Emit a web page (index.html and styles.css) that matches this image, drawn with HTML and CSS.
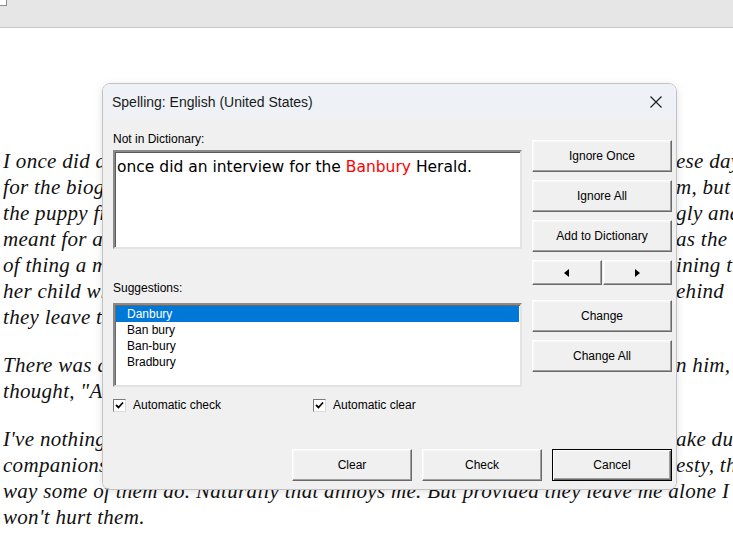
FILE: index.html
```html
<!DOCTYPE html>
<html>
<head>
<meta charset="utf-8">
<title>Spelling</title>
<link rel="stylesheet" href="styles.css">
</head>
<body>
<div class="toolbar"><span class="corner"></span></div>
<div class="doc">
  <div class="para">
    <div class="line"><span class="l">I once did an interview for the Banbury Herald. Th</span><span class="r">ese days</span></div>
    <div class="line"><span class="l">for the biography of a man who had known him, but</span><span class="r">m, but</span></div>
    <div class="line"><span class="l">the puppy from the old farm had grown up ugly and</span><span class="r">gly and</span></div>
    <div class="line"><span class="l">meant for a quiet life in the country, as it was the</span><span class="r">as the</span></div>
    <div class="line"><span class="l">of thing a mother says when she is explaining th</span><span class="r">ining th</span></div>
    <div class="line"><span class="l">her child why the dog must be left behind</span><span class="r">ehind</span></div>
    <div class="line"><span class="l">they leave them alone.</span><span class="r"></span></div>
  </div>
  <div class="para">
    <div class="line"><span class="l">There was a time when I had to go along with him, I</span><span class="r">n him, I</span></div>
    <div class="line"><span class="l">thought, "Ah well, that's the end of that."</span><span class="r"></span></div>
  </div>
  <div class="para">
    <div class="line"><span class="l">I've nothing against people who want to make du</span><span class="r">ake du</span></div>
    <div class="line"><span class="l">companions of us, as long as they do it with honesty, th</span><span class="r">esty, th</span></div>
    <div class="line full">way some of them do. Naturally that annoys me. But provided they leave me alone I</div>
    <div class="line full">won't hurt them.</div>
  </div>
</div>

<div class="dialog">
  <div class="titlebar">
    <span class="title">Spelling: English (United States)</span>
    <svg class="close" width="12" height="12" viewBox="0 0 12 12"><path d="M0.5 0.5 L11.5 11.5 M11.5 0.5 L0.5 11.5" stroke="#1f1f1f" stroke-width="1.2" fill="none"/></svg>
  </div>
  <div class="body">
    <div class="main">
      <div class="leftcol">
        <div class="label">Not in Dictionary:</div>
        <div class="textbox">once did an interview for the <span class="err">Banbury</span> Herald.</div>
        <div class="label sugg">Suggestions:</div>
        <div class="listbox">
          <div class="item sel">Danbury</div>
          <div class="item">Ban bury</div>
          <div class="item">Ban-bury</div>
          <div class="item">Bradbury</div>
        </div>
        <div class="checks">
          <label class="chk"><span class="box"><svg width="9" height="9" viewBox="0 0 9 9"><path d="M1 4 L3.5 6.5 L8 1.5" stroke="#000" stroke-width="1.8" fill="none"/></svg></span>Automatic check</label>
          <label class="chk"><span class="box"><svg width="9" height="9" viewBox="0 0 9 9"><path d="M1 4 L3.5 6.5 L8 1.5" stroke="#000" stroke-width="1.8" fill="none"/></svg></span>Automatic clear</label>
        </div>
      </div>
      <div class="rightcol">
        <button class="btn">Ignore Once</button>
        <button class="btn">Ignore All</button>
        <button class="btn">Add to Dictionary</button>
        <div class="arrows">
          <button class="btn arrow"><span class="tri left"></span></button>
          <button class="btn arrow"><span class="tri right"></span></button>
        </div>
        <button class="btn change">Change</button>
        <button class="btn">Change All</button>
      </div>
    </div>
    <div class="bottom">
      <button class="btn wide">Clear</button>
      <button class="btn wide">Check</button>
      <button class="btn wide default">Cancel</button>
    </div>
  </div>
</div>
</body>
</html>
```
FILE: styles.css
```css
html, body {
  margin: 0;
  padding: 0;
}
body {
  width: 733px;
  height: 545px;
  overflow: hidden;
  position: relative;
  background: #fff;
}
.toolbar {
  height: 27px;
  background: #e6e6e6;
  border-bottom: 1px solid #c6c6c6;
}
.corner {
  display: block;
  width: 6px;
  height: 5px;
  background: #fff;
  border-right: 1px solid #8c8c8c;
  border-bottom: 1px solid #8c8c8c;
}
.doc {
  padding: 120px 0 0 3px;
  font: italic 21px/26px "Liberation Serif", serif;
  letter-spacing: 0.3px;
  color: #111;
}
.para + .para {
  margin-top: 22px;
}
.line {
  display: grid;
  grid-template-columns: 673px auto;
  white-space: nowrap;
  height: 26px;
}
.line.full {
  display: block;
}
.l {
  overflow: hidden;
}
.r {
  overflow: hidden;
}

/* dialog */
.dialog {
  position: absolute;
  left: 102px;
  top: 83px;
  width: 575px;
  height: 407px;
  box-sizing: border-box;
  border: 1px solid #c2c2c2;
  border-radius: 8px;
  overflow: hidden;
  display: flex;
  flex-direction: column;
  box-shadow: 0 2px 8px rgba(0,0,0,0.12);
  font-family: "Liberation Sans", Arial, sans-serif;
  color: #000;
}
.titlebar {
  height: 35px;
  background: #eef2f7;
  display: flex;
  align-items: center;
  justify-content: space-between;
  padding: 0 14px 0 9px;
}
.title {
  font-size: 14px;
  color: #1a1a1a;
}
.close {
  display: block;
}
.body {
  flex: 1;
  background: #f0f0f0;
  display: flex;
  flex-direction: column;
  padding: 0 4px 8px 10px;
}
.main {
  display: flex;
  gap: 10px;
}
.leftcol {
  width: 409px;
  padding-top: 13px;
}
.label {
  font-size: 12px;
  line-height: 14px;
  height: 14px;
}
.label.sugg {
  margin-top: 32px;
}
.textbox {
  margin-top: 4px;
  height: 99px;
  box-sizing: border-box;
  background: #fff;
  border: 2px solid;
  border-color: #8a8a8a #e3e3e3 #e3e3e3 #8a8a8a;
  box-shadow: inset 1px 1px 0 #5a5a5a;
  padding: 5px 2px 0;
  font: 15.5px/20px "DejaVu Sans", sans-serif;
  white-space: nowrap;
}
.err {
  color: #ff0000;
}
.listbox {
  margin-top: 8px;
  height: 84px;
  box-sizing: border-box;
  background: #fff;
  border: 2px solid;
  border-color: #8a8a8a #e3e3e3 #e3e3e3 #8a8a8a;
  box-shadow: inset 1px 1px 0 #6a6a6a;
  padding: 1px 1px 0 1px;
}
.item {
  height: 16px;
  line-height: 17px;
  font-size: 12px;
  padding-left: 11px;
}
.item.sel {
  background: #0078d7;
  color: #fff;
}
.checks {
  margin-top: 10px;
  display: flex;
  height: 16px;
  align-items: center;
}
.chk {
  display: flex;
  align-items: center;
  font-size: 12px;
  width: 200px;
}
.box {
  width: 13px;
  height: 13px;
  box-sizing: border-box;
  background: #fff;
  border: 1px solid;
  border-color: #7a7a7a #dcdcdc #dcdcdc #7a7a7a;
  margin-right: 7px;
  display: flex;
  align-items: center;
  justify-content: center;
}
.rightcol {
  width: 140px;
  padding-top: 21px;
  display: flex;
  flex-direction: column;
}
.btn {
  height: 32px;
  box-sizing: border-box;
  background: #f0f0f0;
  border: 1px solid;
  border-color: #ffffff #696969 #696969 #ffffff;
  box-shadow: inset -1px -1px 0 #a0a0a0, inset 1px 1px 0 #f8f8f8;
  font: 12px "Liberation Sans", Arial, sans-serif;
  color: #000;
  padding: 0;
  margin: 0;
}
.rightcol .btn {
  margin-bottom: 8px;
}
.rightcol .btn.change {
  margin-top: 7px;
}
.arrows {
  display: flex;
  gap: 1px;
  height: 25px;
  margin-bottom: 8px;
}
.arrows .btn.arrow {
  flex: 1;
  height: 25px;
  margin: 0;
  display: flex;
  align-items: center;
  justify-content: center;
}
.tri {
  width: 0;
  height: 0;
  border-top: 4.5px solid transparent;
  border-bottom: 4.5px solid transparent;
}
.tri.left {
  border-right: 5px solid #000;
}
.tri.right {
  border-left: 5px solid #000;
}
.bottom {
  margin-top: auto;
  display: flex;
  justify-content: flex-end;
  gap: 10px;
}
.btn.wide {
  width: 120px;
}
.btn.default {
  border: 1px solid #000;
  box-shadow: inset 1px 1px 0 #ffffff, inset -1px -1px 0 #696969, inset -2px -2px 0 #a0a0a0;
}
```
